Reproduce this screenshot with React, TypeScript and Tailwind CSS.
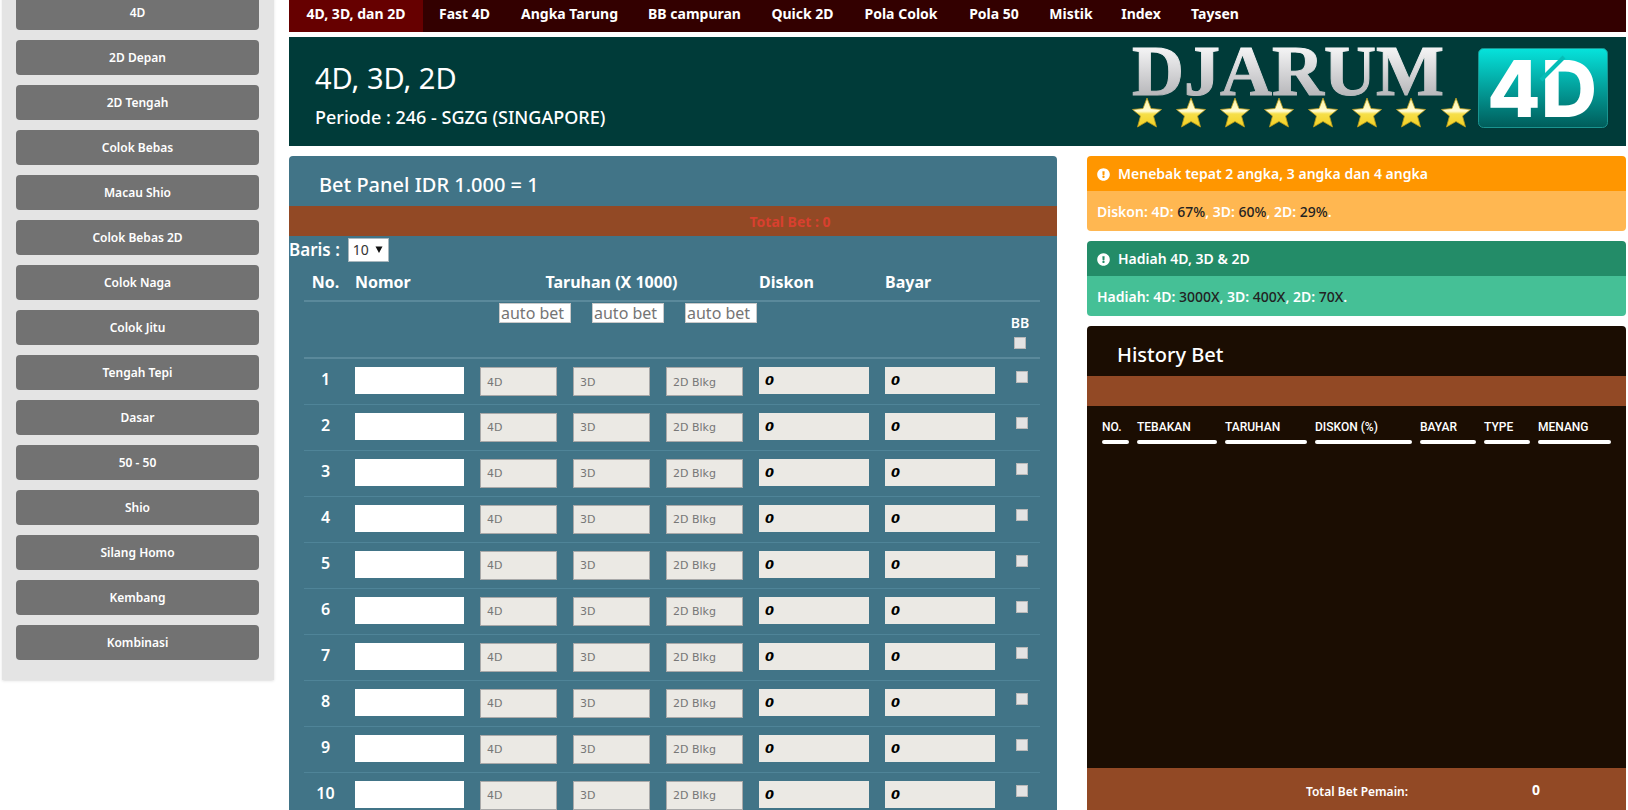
import { useState } from "react";
import { FaExclamationCircle } from "react-icons/fa";

const sideMenu = [
  "4D",
  "2D Depan",
  "2D Tengah",
  "Colok Bebas",
  "Macau Shio",
  "Colok Bebas 2D",
  "Colok Naga",
  "Colok Jitu",
  "Tengah Tepi",
  "Dasar",
  "50 - 50",
  "Shio",
  "Silang Homo",
  "Kembang",
  "Kombinasi",
];

const tabs = [
  { label: "4D, 3D, dan 2D", width: "w-[134px]" },
  { label: "Fast 4D", width: "w-[83px]" },
  { label: "Angka Tarung", width: "w-[127px]" },
  { label: "BB campuran", width: "w-[123px]" },
  { label: "Quick 2D", width: "w-[93px]" },
  { label: "Pola Colok", width: "w-[104px]" },
  { label: "Pola 50", width: "w-[82px]" },
  { label: "Mistik", width: "w-[72px]" },
  { label: "Index", width: "w-[68px]" },
  { label: "Taysen", width: "w-[80px]" },
];

const betTypes = ["4D", "3D", "2D Blkg"];

const historyCols = [
  { label: "NO.", width: "w-[35px]" },
  { label: "TEBAKAN", width: "w-[88px]" },
  { label: "TARUHAN", width: "w-[90px]" },
  { label: "DISKON (%)", width: "w-[105px]" },
  { label: "BAYAR", width: "w-[64px]" },
  { label: "TYPE", width: "w-[54px]" },
  { label: "MENANG", width: "w-[81px]" },
];

const checkbox =
  "block size-3 appearance-none border border-[#b9b9b9] bg-[#e3e3e3] checked:bg-[#3b6f82]";

function Logo() {
  const stars = [15, 59, 103, 147, 191, 235, 279, 324];
  return (
    <svg viewBox="0 0 476 82" className="h-[82px] w-[476px] shrink-0 overflow-visible" role="img" aria-label="Djarum 4D">
      <defs>
        <linearGradient id="silver" x1="0" y1="0" x2="0" y2="46" gradientUnits="userSpaceOnUse">
          <stop offset="0" stopColor="#f4f4f5" />
          <stop offset="1" stopColor="#b9b9bc" />
        </linearGradient>
        <linearGradient id="teal" x1="0" y1="0" x2="0" y2="1">
          <stop offset="0" stopColor="#06e3dc" />
          <stop offset="1" stopColor="#005c5a" />
        </linearGradient>
        <linearGradient id="gold" x1="0" y1="0" x2="0" y2="1">
          <stop offset="0" stopColor="#fdf3a0" />
          <stop offset="0.45" stopColor="#fffbd2" />
          <stop offset="0.55" stopColor="#f6df4a" />
          <stop offset="1" stopColor="#f3d022" />
        </linearGradient>
      </defs>
      <text
        x="0"
        y="47"
        fill="url(#silver)"
        stroke="url(#silver)"
        strokeWidth="1"
        fontFamily="'Liberation Serif', serif"
        fontWeight="700"
        fontSize="72"
      >
        DJARUM
      </text>
      {stars.map((x) => (
        <path
          key={x}
          transform={`translate(${x} 65)`}
          d="M0 -15 L4 -4.500 L14.500 -3.500 L6.500 3 L9.500 14 L0 8.500 L-9.500 14 L-6.500 3 L-14.500 -3.500 L-4 -4.500 Z"
          fill="url(#gold)"
          stroke="#b99a1c"
          strokeWidth="0.800"
          strokeLinejoin="round"
        />
      ))}
      <rect x="346.500" y="0.500" width="129" height="79" rx="5" fill="url(#teal)" stroke="#1a9490" />
      <text x="355" y="69" fill="#fff" fontFamily="Inter, sans-serif" fontWeight="800" fontSize="78">
        4D
      </text>
      <path d="M409 32 L432 9" stroke="#05bdb7" strokeWidth="4" />
    </svg>
  );
}

function InfoCard({ title, head, body, children }: { title: string; head: string; body: string; children: React.ReactNode }) {
  return (
    <section className="overflow-hidden rounded-sm text-sm font-semibold text-white">
      <h3 className={`flex h-[35px] items-center gap-2 px-[10px] pt-px ${head}`}>
        <FaExclamationCircle size={13} />
        {title}
      </h3>
      <p className={`flex h-10 items-center whitespace-pre px-[10px] pt-px ${body}`}>{children}</p>
    </section>
  );
}

function BetPanel() {
  const [rows, setRows] = useState(10);

  return (
    <section className="overflow-hidden rounded-t-sm bg-[#417487] pb-10 text-white">
      <h2 className="flex h-[50px] items-center px-[30px] pt-2 text-xl font-medium">Bet Panel IDR 1.000 = 1</h2>
      <div className="flex h-[30px] items-center justify-center bg-[#924925] pt-[2px] pl-[234px] text-sm font-bold text-[#d8402f]">
        Total Bet : 0
      </div>
      <div className="flex h-7 items-center gap-2 text-[17px] font-semibold">
        <label htmlFor="baris">Baris :</label>
        <div className="relative">
          <select
            id="baris"
            value={rows}
            onChange={(e) => setRows(Number(e.target.value))}
            className="block h-6 w-[41px] appearance-none border border-[#a9b7bd] bg-white pl-1 text-sm font-normal text-[#333]"
          >
            <option>10</option>
            <option>20</option>
            <option>50</option>
          </select>
          <svg viewBox="0 0 8 8" className="pointer-events-none absolute top-2 right-[6px] size-2">
            <path d="M0.500 0.500h7L4 7z" fill="#111" />
          </svg>
        </div>
      </div>

      <div className="pr-[17px] pl-[15px]">
        <table className="w-full table-fixed">
          <colgroup>
            <col className="w-[43px]" />
            <col className="w-[125px]" />
            <col className="w-[93px]" />
            <col className="w-[93px]" />
            <col className="w-[93px]" />
            <col className="w-[126px]" />
            <col className="w-[126px]" />
            <col className="w-[37px]" />
          </colgroup>
          <thead>
            <tr className="h-[37px] border-b-2 border-[#5a899b] text-left text-base font-bold">
              <th className="text-center">No.</th>
              <th className="px-2">Nomor</th>
              <th colSpan={3} className="text-center">Taruhan (X 1000)</th>
              <th className="px-2">Diskon</th>
              <th className="px-2">Bayar</th>
              <th />
            </tr>
            <tr className="h-[57px] border-b-2 border-[#5a899b] align-top">
              <td />
              <td />
              {betTypes.map((type) => (
                <td key={type} className="pt-px pl-[27px]">
                  <input
                    aria-label={`auto bet ${type}`}
                    placeholder="auto bet"
                    className="block h-5 w-[72px] border border-[#c9c9c9] bg-white px-px text-base text-[#333] placeholder:text-[#757575]"
                  />
                </td>
              ))}
              <td />
              <td />
              <td className="pt-[11px] pr-[3px]">
                <label className="flex flex-col items-center gap-1 text-sm font-semibold">
                  BB
                  <input type="checkbox" className={checkbox} />
                </label>
              </td>
            </tr>
          </thead>
          <tbody>
            {Array.from({ length: rows }, (_, i) => i + 1).map((no) => (
              <tr key={no} className="h-[46px] border-b border-[#4f8498] align-top">
                <td className="pt-2 text-center text-base font-semibold">{no}</td>
                <td className="px-2 pt-2">
                  <input aria-label={`Nomor ${no}`} className="block h-[27px] w-full bg-white px-[6px] text-sm text-black" />
                </td>
                {betTypes.map((type) => (
                  <td key={type} className="px-2 pt-2">
                    <input
                      aria-label={`${type} ${no}`}
                      placeholder={type}
                      disabled
                      className="block h-[29px] w-full border border-[#a9a9a9] bg-[#ebe9e4] px-[6px] pt-px font-['DejaVu_Sans',sans-serif] text-[11px] placeholder:text-[#777]"
                    />
                  </td>
                ))}
                {["Diskon", "Bayar"].map((name) => (
                  <td key={name} className="px-2 pt-2">
                    <input
                      aria-label={`${name} ${no}`}
                      defaultValue="0"
                      readOnly
                      className="block h-[27px] w-full bg-[#ebe9e4] px-[6px] font-['DejaVu_Sans',sans-serif] text-[13px] font-bold text-black italic"
                    />
                  </td>
                ))}
                <td className="pt-3 pl-[13px]">
                  <input type="checkbox" aria-label={`BB ${no}`} className={checkbox} />
                </td>
              </tr>
            ))}
          </tbody>
        </table>
      </div>
    </section>
  );
}

function HistoryPanel() {
  return (
    <section className="flex flex-1 flex-col overflow-hidden rounded-t-sm bg-[#1b0d02] text-white">
      <h2 className="flex h-[50px] items-center px-[30px] pt-2 text-xl font-medium">History Bet</h2>
      <div className="h-[30px] bg-[#924925]" />
      <div className="h-[362px] px-[11px] pt-[10px]">
        <table className="w-full table-fixed font-[Roboto,sans-serif] text-xs font-medium">
          <thead>
            <tr className="text-left">
              {historyCols.map(({ label, width }) => (
                <th key={label} className={`px-1 font-medium whitespace-nowrap ${width}`}>
                  <div className="pb-[2px] leading-[22px]">{label}</div>
                  <div className="h-1 rounded-sm bg-white" />
                </th>
              ))}
            </tr>
          </thead>
        </table>
      </div>
      <div className="flex flex-1 justify-end bg-[#924925] pt-3">
        <div className="pt-1 text-xs font-semibold">Total Bet Pemain:</div>
        <div className="w-[132px] text-right text-sm font-bold">0</div>
        <div className="w-[86px]" />
      </div>
    </section>
  );
}

export default function App() {
  const [active, setActive] = useState(tabs[0].label);

  return (
    <div className="flex min-h-screen items-start gap-[15px] overflow-hidden bg-white px-[2px] font-['Noto_Sans',sans-serif]">
      <aside className="-mt-[5px] flex w-[272px] shrink-0 flex-col gap-[10px] bg-[#e4e4e4] pr-[15px] pb-5 pl-[14px] shadow-sm">
        {sideMenu.map((item) => (
          <button key={item} className="h-[35px] rounded bg-[#727272] text-xs font-semibold text-white">
            {item}
          </button>
        ))}
      </aside>

      <main className="min-w-0 flex-1">
        <nav className="flex h-8 bg-[#330000]">
          {tabs.map(({ label, width }) => (
            <button
              key={label}
              onClick={() => setActive(label)}
              className={`pb-[5px] text-sm font-bold whitespace-nowrap text-white ${width} ${label === active ? "bg-[#660000]" : ""}`}
            >
              {label}
            </button>
          ))}
        </nav>

        <header className="mt-[5px] flex h-[109px] items-start justify-between bg-[#003b39] pr-[18px] pl-[26px] text-white">
          <div className="pt-[23px]">
            <h1 className="text-[29px] leading-9">4D, 3D, 2D</h1>
            <p className="mt-[7px] text-lg leading-7 font-medium">Periode : 246 - SGZG (SINGAPORE)</p>
          </div>
          <div className="pt-[11px]">
            <Logo />
          </div>
        </header>

        <div className="mt-[10px] grid grid-cols-[minmax(0,768fr)_minmax(0,539fr)] gap-[30px]">
          <BetPanel />
          <div className="flex flex-col gap-[10px]">
            <InfoCard title="Menebak tepat 2 angka, 3 angka dan 4 angka" head="bg-[#ff9600]" body="bg-[#ffb751]">
              Diskon: 4D: <span className="font-medium text-[#222]">67%</span>, 3D:{" "}
              <span className="font-medium text-[#222]">60%</span>, 2D: <span className="font-medium text-[#222]">29%</span>.
            </InfoCard>
            <InfoCard title="Hadiah 4D, 3D & 2D" head="bg-[#238c68]" body="bg-[#45c096]">
              Hadiah: 4D: <span className="font-medium text-[#222]">3000X</span>, 3D:{" "}
              <span className="font-medium text-[#222]">400X</span>, 2D: <span className="font-medium text-[#222]">70X</span>.
            </InfoCard>
            <HistoryPanel />
          </div>
        </div>
      </main>
    </div>
  );
}
